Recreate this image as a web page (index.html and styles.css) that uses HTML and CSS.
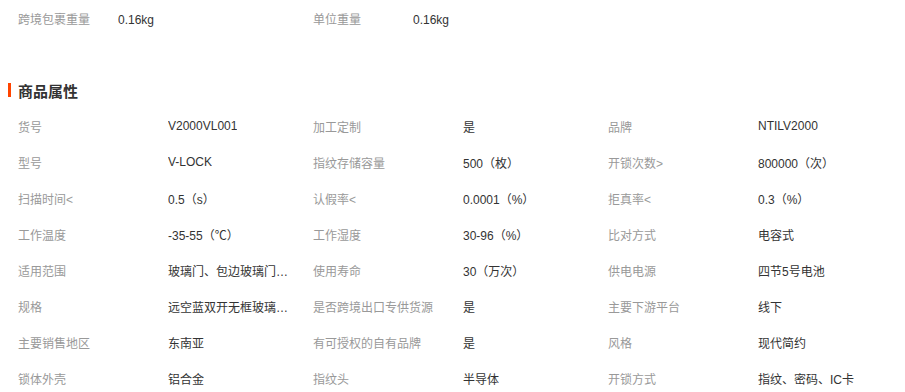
FILE: index.html
```html
<!DOCTYPE html>
<html lang="zh">
<head>
<meta charset="utf-8">
<link rel="stylesheet" href="styles.css">
</head>
<body>
<div class="page">
  <div class="top">
    <div class="tcell"><span class="tlabel">跨境包裹重量</span><span class="val">0.16kg</span></div>
    <div class="tcell"><span class="tlabel">单位重量</span><span class="val">0.16kg</span></div>
  </div>
  <div class="title"><span class="bar"></span><span class="ttext">商品属性</span></div>
  <div class="attrs">
    <div class="cell"><span class="label">货号</span><span class="val">V2000VL001</span></div>
    <div class="cell"><span class="label">加工定制</span><span class="val">是</span></div>
    <div class="cell"><span class="label">品牌</span><span class="val">NTILV2000</span></div>

    <div class="cell"><span class="label">型号</span><span class="val">V-LOCK</span></div>
    <div class="cell"><span class="label">指纹存储容量</span><span class="val">500（枚）</span></div>
    <div class="cell"><span class="label">开锁次数&gt;</span><span class="val">800000（次）</span></div>

    <div class="cell"><span class="label">扫描时间&lt;</span><span class="val">0.5（s）</span></div>
    <div class="cell"><span class="label">认假率&lt;</span><span class="val">0.0001（%）</span></div>
    <div class="cell"><span class="label">拒真率&lt;</span><span class="val">0.3（%）</span></div>

    <div class="cell"><span class="label">工作温度</span><span class="val">-35-55（℃）</span></div>
    <div class="cell"><span class="label">工作湿度</span><span class="val">30-96（%）</span></div>
    <div class="cell"><span class="label">比对方式</span><span class="val">电容式</span></div>

    <div class="cell"><span class="label">适用范围</span><span class="val">玻璃门、包边玻璃门、木门、金属门</span></div>
    <div class="cell"><span class="label">使用寿命</span><span class="val">30（万次）</span></div>
    <div class="cell"><span class="label">供电电源</span><span class="val">四节5号电池</span></div>

    <div class="cell"><span class="label">规格</span><span class="val">远空蓝双开无框玻璃门指纹锁</span></div>
    <div class="cell"><span class="label">是否跨境出口专供货源</span><span class="val">是</span></div>
    <div class="cell"><span class="label">主要下游平台</span><span class="val">线下</span></div>

    <div class="cell"><span class="label">主要销售地区</span><span class="val">东南亚</span></div>
    <div class="cell"><span class="label">有可授权的自有品牌</span><span class="val">是</span></div>
    <div class="cell"><span class="label">风格</span><span class="val">现代简约</span></div>

    <div class="cell"><span class="label">锁体外壳</span><span class="val">铝合金</span></div>
    <div class="cell"><span class="label">指纹头</span><span class="val">半导体</span></div>
    <div class="cell"><span class="label">开锁方式</span><span class="val">指纹、密码、IC卡</span></div>
  </div>
</div>
</body>
</html>
```

FILE: styles.css
```css
html, body {
  margin: 0;
  padding: 0;
  background: #fff;
}
.page {
  font-family: "Liberation Sans", "Noto Sans CJK SC", sans-serif;
  font-size: 12px;
  color: #333;
}
.top {
  display: grid;
  grid-template-columns: 295px 295px;
  padding-left: 18px;
  height: 40px;
  line-height: 40px;
}
.tcell {
  display: flex;
}
.tlabel {
  width: 100px;
  color: #999;
  flex: none;
}
.title {
  display: flex;
  align-items: center;
  margin-top: 38px;
  padding-left: 8px;
  height: 24px;
}
.bar {
  width: 3px;
  height: 14px;
  background: #ff4400;
  margin-right: 7px;
}
.ttext {
  font-size: 15px;
  font-weight: bold;
  color: #333;
}
.attrs {
  margin-top: 6px;
  padding-left: 18px;
  display: grid;
  grid-template-columns: repeat(3, 295px);
  grid-auto-rows: 36px;
}
.cell {
  display: flex;
  align-items: center;
  min-width: 0;
}
.label {
  width: 150px;
  flex: none;
  color: #999;
  white-space: nowrap;
}
.val {
  color: #333;
  white-space: nowrap;
  overflow: hidden;
  text-overflow: ellipsis;
  max-width: 124px;
}
```
